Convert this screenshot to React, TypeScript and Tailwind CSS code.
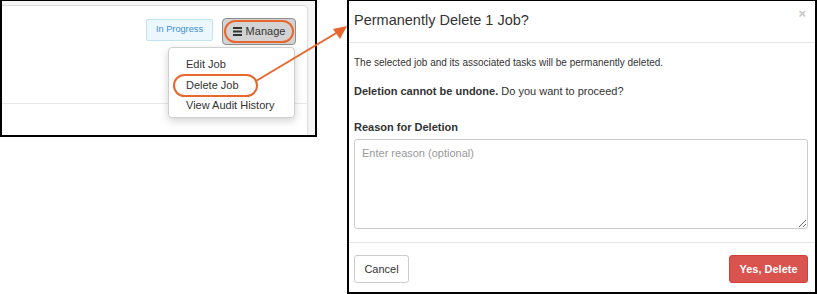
import React from "react";

export default function App() {
  return (
    <div className="relative flex w-[817px] h-[294px] bg-white font-['Liberation_Sans',Arial,sans-serif] text-[#333]">
      {/* Left screenshot */}
      <div className="relative w-[317px] h-[137px] shrink-0 border-2 border-t border-black bg-[#f5f5f5] pt-[4px] pr-[7px] overflow-hidden">
        <div className="ml-[-10px] h-[140px] bg-white border border-[#dddddd] rounded-tr-[4px]">
          <div className="h-[98px] border-b border-[#e8e8e8] flex justify-end items-start pt-[12px] pr-[11px] gap-[9px]">
            <div className="mt-[1px] h-[22px] w-[67px] flex items-center justify-center border border-[#bfe2f4] bg-[#ecf7fd] rounded-[2px] text-[9.2px] text-[#3d8fd4]">
              In Progress
            </div>
            <div className="relative h-[27px] w-[74px] flex items-center justify-center gap-[4px] border border-[#8e8e8e] bg-[#d3d3d3] rounded-[4px] text-[11px] text-[#333]">
              <svg width="9" height="9" viewBox="0 0 9 9">
                <rect x="0" y="0" width="9" height="2" fill="#333" />
                <rect x="0" y="3.5" width="9" height="2" fill="#333" />
                <rect x="0" y="7" width="9" height="2" fill="#333" />
              </svg>
              <span>Manage</span>
              <div className="absolute left-[1px] right-[1px] top-[1px] bottom-[1px] rounded-full border-2 border-[#e8672f]" />
            </div>
          </div>
        </div>
        {/* dropdown */}
        <div className="absolute left-[166px] top-[46px] w-[127px] h-[71px] bg-white border border-[#cfcfcf] rounded-[4px] shadow-[0_3px_8px_rgba(0,0,0,0.18)] pt-[6px] flex flex-col text-[11px] text-[#333] leading-[20.5px]">
          <div className="pl-[17px]">Edit Job</div>
          <div className="relative pl-[17px]">
            Delete Job
            <div className="absolute left-[4px] w-[85px] top-[-1px] h-[23px] rounded-full border-2 border-[#e8672f]" />
          </div>
          <div className="pl-[17px]">View Audit History</div>
        </div>
      </div>

      <div className="w-[30px] shrink-0" />

      {/* Modal */}
      <div className="w-[470px] h-[294px] shrink-0 border-2 border-t border-black flex flex-col">
        <div className="h-[42px] border-b border-[#e5e5e5] flex justify-between items-start pl-[5px] pr-[9px]">
          <div className="pt-[9px] text-[14.5px] leading-[20px] text-[#333]">Permanently Delete 1 Job?</div>
          <div className="pt-[5px] text-[13px] font-bold text-[#c4c4c4] leading-[16px]">×</div>
        </div>
        <div className="flex flex-col pl-[5px] pr-[7px] text-[11px] leading-[16px]">
          <div className="mt-[12px] text-[10px]">The selected job and its associated tasks will be permanently deleted.</div>
          <div className="mt-[12px]">
            <span className="font-bold">Deletion cannot be undone.</span> Do you want to proceed?
          </div>
          <div className="mt-[20px] font-bold">Reason for Deletion</div>
          <textarea
            className="mt-[4px] h-[90px] w-full border border-[#cccccc] rounded-[3px] px-[7px] py-[5px] text-[11px] leading-[16px] placeholder:text-[#999999] outline-none"
            placeholder="Enter reason (optional)"
          />
        </div>
        <div className="mt-[13px] border-t border-[#e5e5e5] flex-1 flex justify-between items-start pt-[12px] pl-[5px] pr-[7px]">
          <button className="h-[28px] w-[55px] border border-[#cccccc] rounded-[3px] bg-white text-[11px] text-[#333]">
            Cancel
          </button>
          <button className="h-[28px] w-[79px] border border-[#d43f3a] rounded-[3px] bg-[#d9534f] text-[11px] font-bold text-white">
            Yes, Delete
          </button>
        </div>
      </div>

      {/* Arrow overlay */}
      <svg className="absolute left-0 top-0 pointer-events-none" width="817" height="294" viewBox="0 0 817 294">
        <line x1="256" y1="81" x2="338" y2="32" stroke="#e8672f" strokeWidth="2" />
        <polygon points="347,26 333,29 340,39" fill="#e8672f" />
      </svg>
    </div>
  );
}
